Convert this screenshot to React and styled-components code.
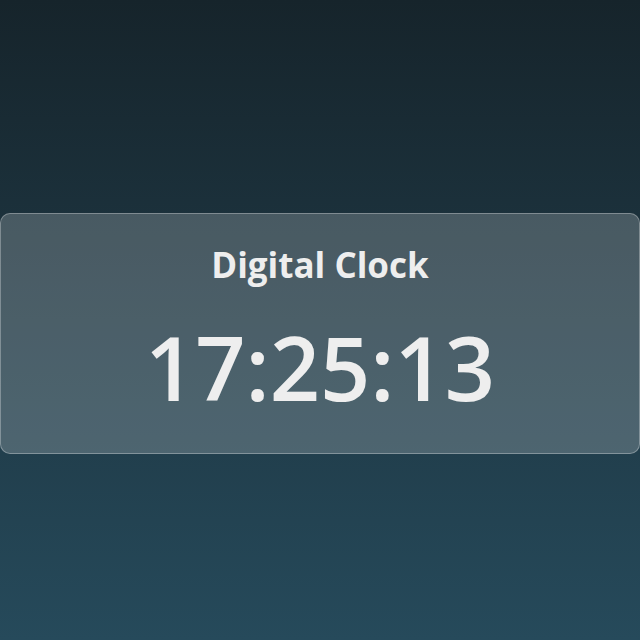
import styled, { createGlobalStyle } from "styled-components";

const GlobalStyle = createGlobalStyle`
  html, body {
    margin: 0;
    padding: 0;
  }
  body {
    font-family: "Open Sans", "Noto Sans", sans-serif;
  }
`

const Page = styled.div`
  width: 100%;
  height: 640px;
  box-sizing: border-box;
  padding-top: 213px;
  background: linear-gradient(180deg, #16242b 0%, #264a5b 100%);
  display: flex;
  justify-content: center;
  align-items: flex-start;
  overflow: hidden;
`

const Card = styled.div`
  width: 640px;
  height: 241px;
  box-sizing: border-box;
  border: 1px solid rgba(255, 255, 255, 0.3);
  border-radius: 10px;
  background: rgba(255, 255, 255, 0.2);
  display: flex;
  flex-direction: column;
  align-items: center;
  padding-top: 27px;
  gap: 23px;
  color: #eeeeee;
`

const Title = styled.h1`
  margin: 0;
  font-size: 35px;
  font-weight: 700;
  line-height: 48px;
`

const Time = styled.div`
  font-size: 88px;
  font-weight: 600;
  line-height: 110px;
`

const App = () => {
  return (
    <Page>
      <GlobalStyle />
      <Card>
        <Title>Digital Clock</Title>
        <Time>17:25:13</Time>
      </Card>
    </Page>
  )
}

export default App;
